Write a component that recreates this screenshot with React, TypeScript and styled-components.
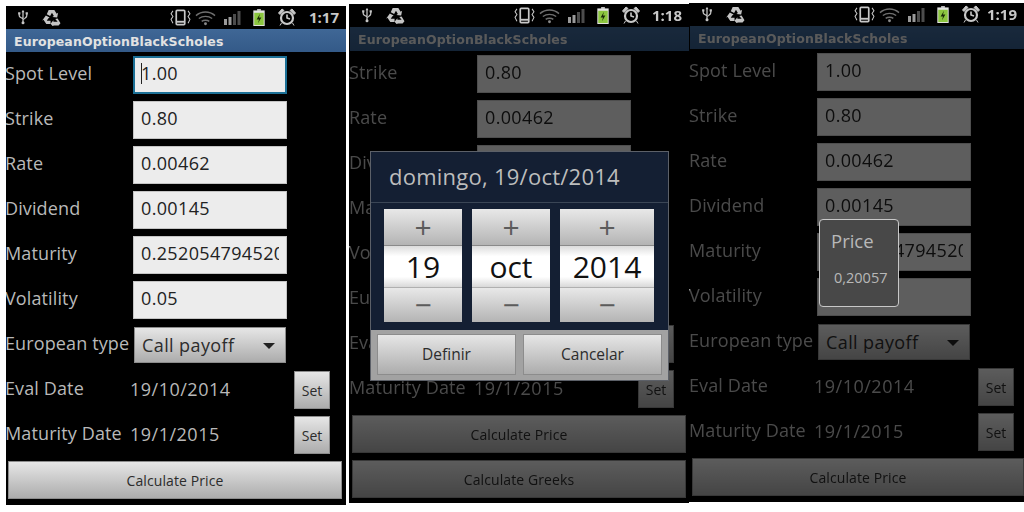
import React from "react";
import styled, { createGlobalStyle } from "styled-components";

const GlobalStyle = createGlobalStyle`
  html, body {
    margin: 0;
    background: #fff;
    font-family: "Open Sans", "Noto Sans", sans-serif;
    overflow: hidden;
  }
`;

type RowData =
  | { kind: "field"; label: string; value: string; focused?: boolean }
  | { kind: "select"; label: string; value: string }
  | { kind: "date"; label: string; value: string }
  | { kind: "action"; value: string };

const spot: RowData = { kind: "field", label: "Spot Level", value: "1.00", focused: true };
const spotPlain: RowData = { kind: "field", label: "Spot Level", value: "1.00" };
const common: RowData[] = [
  { kind: "field", label: "Strike", value: "0.80" },
  { kind: "field", label: "Rate", value: "0.00462" },
  { kind: "field", label: "Dividend", value: "0.00145" },
  { kind: "field", label: "Maturity", value: "0.25205479452054" },
  { kind: "field", label: "Volatility", value: "0.05" },
  { kind: "select", label: "European type", value: "Call payoff" },
  { kind: "date", label: "Eval Date", value: "19/10/2014" },
  { kind: "date", label: "Maturity Date", value: "19/1/2015" },
  { kind: "action", value: "Calculate Price" },
];

const StatusIcons = () => (
  <>
    <UsbIcon viewBox="0 0 16 20">
      <path d="M8 1v17M3 5v3c0 2 5 3 5 4s5-2 5-4V5" fill="none" stroke="#c4c4c4" strokeWidth="1.7" />
      <circle cx="8" cy="17" r="2" fill="#c4c4c4" />
      <path d="M8 0l2 3H6zM1.500 3h3v3h-3zM11.500 3h3v3h-3z" fill="#c4c4c4" />
    </UsbIcon>
    <RecycleIcon viewBox="0 0 20 18">
      <path d="M7 1h6l2.500 4 1.500-1-1 5-5-.5 1.500-1L10.500 4 8.500 7.500 5 5.500z" fill="#c4c4c4" />
      <path d="M4 7l4 2-1.500 1L5 12.500h4V16H4.500L1.500 11.500 0 12.500z" fill="#c4c4c4" />
      <path d="M16.500 10l3 5-2 2.500H12V19l-3-3.500 3-3.500v1.500h4.500L14 10.500z" fill="#c4c4c4" />
    </RecycleIcon>
    <VibrateIcon viewBox="0 0 22 18">
      <rect x="6.500" y="1.500" width="9" height="15" rx="1" fill="none" stroke="#c8c8c8" strokeWidth="1.8" />
      <path d="M6.500 13.500h9" stroke="#c8c8c8" strokeWidth="2" />
      <path d="M3 2L1 5l2 3-2 3 2 4M19 2l2 3-2 3 2 3-2 4" fill="none" stroke="#c8c8c8" strokeWidth="1.1" />
    </VibrateIcon>
    <WifiIcon viewBox="0 0 22 16">
      <path d="M1 5.500c6-5 14-5 20 0M4 8.500c4-3 10-3 14 0M7 11.500c2-1.500 6-1.500 8 0" fill="none" stroke="#6f6f6f" strokeWidth="1.4" />
      <circle cx="11" cy="14" r="1.500" fill="#8a8a8a" />
    </WifiIcon>
    <SignalIcon viewBox="0 0 17 14">
      <path d="M0 8h3v6H0zM4.500 6h3v8h-3z" fill="#9a9a9a" />
      <path d="M9 3h3v11H9zM13.500 0h3v14h-3z" fill="#4c4c4c" />
    </SignalIcon>
    <BatteryIcon viewBox="0 0 12 18">
      <path d="M4 0h4v2H4z" fill="#bdbdbd" />
      <rect y="1.500" width="12" height="16.500" fill="#e4e4e4" />
      <rect x="1" y="4" width="10" height="13" fill="#8cc63f" />
      <path d="M7 5L3.500 11H6l-1 4 3.500-6H6z" fill="#1a2a08" />
    </BatteryIcon>
    <AlarmIcon viewBox="0 0 18 18">
      <circle cx="9" cy="10" r="6" fill="none" stroke="#c8c8c8" strokeWidth="2.200" />
      <path d="M9 6.500V10l3 1" fill="none" stroke="#c8c8c8" strokeWidth="1.600" />
      <path d="M0.500 5L4 1l2 1.500L2 6.500zM17.500 5L14 1l-2 1.500L16 6.500zM3.500 15l-1.500 2.500M14.500 15l1.500 2.500" fill="#c8c8c8" stroke="#c8c8c8" />
    </AlarmIcon>
  </>
);

const Row = ({ row }: { row: RowData }) => {
  if (row.kind === "action") {
    return (
      <RowShell>
        <WideButton>{row.value}</WideButton>
      </RowShell>
    );
  }
  if (row.kind === "date") {
    return (
      <DateRow>
        <Label>{row.label}</Label>
        <DateValue>{row.value}</DateValue>
        <SetButton>Set</SetButton>
      </DateRow>
    );
  }
  return (
    <FieldRow>
      <Label>{row.label}</Label>
      {row.kind === "select" ? (
        <SelectBox>
          {row.value}
          <Caret />
        </SelectBox>
      ) : (
        <Field $focused={row.focused}>
          <FieldText>
            {row.focused && <TextCaret />}
            {row.value}
          </FieldText>
        </Field>
      )}
    </FieldRow>
  );
};

type PhoneProps = {
  left: number;
  top: number;
  width: number;
  inset: number;
  titleHeight: number;
  time: string;
  rows: RowData[];
  dim?: boolean;
  children?: React.ReactNode;
};

const Phone = ({ left, top, width, inset, titleHeight, time, rows, dim, children }: PhoneProps) => (
  <PhoneFrame $left={left} $top={top} $width={width} $inset={inset}>
    <StatusBar>
      <StatusIcons />
      <Clock>{time}</Clock>
    </StatusBar>
    <Screen>
      <TitleBar $height={titleHeight}>EuropeanOptionBlackScholes</TitleBar>
      {rows.map((row, i) => (
        <Row key={i} row={row} />
      ))}
      {dim && <Dimmer />}
      {children}
    </Screen>
  </PhoneFrame>
);

const Picker = ({ value, wide }: { value: string; wide?: boolean }) => (
  <PickerColumn $wide={wide}>
    <Stepper $height={36}>+</Stepper>
    <PickerValue>{value}</PickerValue>
    <Stepper $height={34}>&minus;</Stepper>
  </PickerColumn>
);

export default function App() {
  return (
    <>
      <GlobalStyle />
      <Page>
        <Phone left={6} top={6} width={340} inset={0} titleHeight={23} time="1:17" rows={[spot, ...common]} />
        <Phone
          left={3}
          top={4}
          width={340}
          inset={1}
          titleHeight={24}
          time="1:18"
          dim
          rows={[...common.slice(0, 9), { kind: "action", value: "Calculate Greeks" }]}
        >
          <DateDialog>
            <DialogTitle>domingo, 19/oct/2014</DialogTitle>
            <Pickers>
              <Picker value="19" />
              <Picker value="oct" />
              <Picker value="2014" wide />
            </Pickers>
            <DialogFooter>
              <DialogButton>Definir</DialogButton>
              <DialogButton>Cancelar</DialogButton>
            </DialogFooter>
          </DateDialog>
        </Phone>
        <Phone left={0} top={3} width={335} inset={1} titleHeight={23} time="1:19" dim rows={[spotPlain, ...common]}>
          <PriceToast>
            <ToastTitle>Price</ToastTitle>
            <ToastValue>0,20057</ToastValue>
          </PriceToast>
        </Phone>
      </Page>
    </>
  );
}

const Page = styled.div`
  display: flex;
  align-items: flex-start;
  width: 1024px;
  height: 512px;
  overflow: hidden;
  filter: blur(0.35px);
`;

const PhoneFrame = styled.div<{ $left: number; $top: number; $width: number; $inset: number }>`
  flex: none;
  box-sizing: border-box;
  width: ${({ $width }) => $width}px;
  height: 499px;
  margin: ${({ $top }) => $top}px 0 0 ${({ $left }) => $left}px;
  padding-left: ${({ $inset }) => $inset}px;
  background: #000;
  overflow: hidden;
`;

const StatusBar = styled.div`
  position: relative;
  height: 23px;
  background: #000;
`;

const StatusGlyph = styled.svg`
  position: absolute;
`;

const UsbIcon = styled(StatusGlyph)`
  left: 11px;
  top: 3px;
  width: 12px;
  height: 17px;
`;

const RecycleIcon = styled(StatusGlyph)`
  left: 36px;
  top: 3px;
  width: 19px;
  height: 17px;
`;

const VibrateIcon = styled(StatusGlyph)`
  left: 164px;
  top: 3px;
  width: 21px;
  height: 17px;
`;

const WifiIcon = styled(StatusGlyph)`
  left: 189px;
  top: 4px;
  width: 21px;
  height: 16px;
`;

const SignalIcon = styled(StatusGlyph)`
  left: 218px;
  top: 5px;
  width: 17px;
  height: 14px;
`;

const BatteryIcon = styled(StatusGlyph)`
  left: 247px;
  top: 3px;
  width: 12px;
  height: 17px;
`;

const AlarmIcon = styled(StatusGlyph)`
  left: 272px;
  top: 2px;
  width: 18px;
  height: 18px;
`;

const Clock = styled.span`
  position: absolute;
  right: 7px;
  top: 1px;
  color: #c8c8c8;
  font-size: 15px;
  font-weight: 700;
  line-height: 21px;
`;

const Screen = styled.div`
  position: relative;
  height: 476px;
`;

const TitleBar = styled.div<{ $height: number }>`
  box-sizing: border-box;
  height: ${({ $height }) => $height}px;
  padding-left: 8px;
  background: linear-gradient(#3f6796, #345a88);
  color: #e2e2e2;
  font-family: "DejaVu Sans", sans-serif;
  font-size: 12.5px;
  font-weight: 700;
  letter-spacing: 0.12px;
  line-height: ${({ $height }) => $height + 2}px;
`;

const RowShell = styled.div`
  display: flex;
  align-items: center;
  height: 45px;
`;

const FieldRow = styled(RowShell)`
  display: grid;
  grid-template-columns: 127px 154px;
`;

const DateRow = styled(RowShell)`
  display: grid;
  grid-template-columns: 124px 164px 36px;
`;

const Label = styled.span`
  margin: 0 0 4px -1px;
  color: #b9b9b9;
  font-size: 18px;
  letter-spacing: 0.12px;
  line-height: 24px;
  white-space: nowrap;
`;

const Field = styled.div<{ $focused?: boolean }>`
  box-sizing: border-box;
  height: 38px;
  padding: 0 ${({ $focused }) => ($focused ? 6 : 7)}px;
  background: #ececec;
  border: ${({ $focused }) => ($focused ? "2px solid #1c7096" : "1px solid #c4c4c4")};
  color: #222;
  font-size: 18px;
  letter-spacing: 0.35px;
  line-height: ${({ $focused }) => ($focused ? 31 : 33)}px;
`;

const FieldText = styled.div`
  overflow: hidden;
  white-space: nowrap;
`;

const TextCaret = styled.span`
  display: inline-block;
  width: 1px;
  height: 21px;
  margin-right: -1px;
  background: #222;
  vertical-align: -4px;
`;

const raised = `
  background: linear-gradient(#e6e6e6, #acacac);
  border: 1px solid #8c8c8c;
  box-sizing: border-box;
  color: #2c2c2c;
`;

const SelectBox = styled.div`
  ${raised}
  position: relative;
  width: 152px;
  height: 36px;
  margin-left: 1px;
  padding-left: 7px;
  font-size: 18px;
  letter-spacing: 0.4px;
  line-height: 34px;
`;

const Caret = styled.span`
  position: absolute;
  right: 10px;
  top: 15px;
  border-left: 6.5px solid transparent;
  border-right: 6.5px solid transparent;
  border-top: 6px solid #222;
`;

const DateValue = styled.span`
  margin-bottom: 2px;
  color: #b9b9b9;
  font-size: 18px;
  letter-spacing: 0.5px;
`;

const SetButton = styled.div`
  ${raised}
  height: 38px;
  font-size: 14px;
  line-height: 38px;
  text-align: center;
`;

const WideButton = styled.div`
  ${raised}
  width: 334px;
  height: 38px;
  margin-left: 2px;
  font-size: 14px;
  letter-spacing: 0.1px;
  line-height: 37px;
  text-align: center;
`;

const Dimmer = styled.div`
  position: absolute;
  inset: -1px 0 0 0;
  background: rgba(0, 0, 0, 0.6);
`;

const DateDialog = styled.div`
  position: absolute;
  left: 20px;
  top: 124px;
  width: 299px;
  height: 230px;
  box-sizing: border-box;
  display: flex;
  flex-direction: column;
  border: 1px solid #5c6068;
  background: #141f33;
`;

const DialogTitle = styled.div`
  flex: none;
  height: 50px;
  padding-left: 18px;
  border-bottom: 1px solid #3b4656;
  color: #bdbdbd;
  font-size: 22px;
  letter-spacing: 0.25px;
  line-height: 48px;
`;

const Pickers = styled.div`
  flex: none;
  display: flex;
  gap: 10px;
  padding: 6px 0 0 13px;
  height: 121px;
`;

const PickerColumn = styled.div<{ $wide?: boolean }>`
  display: flex;
  flex-direction: column;
  width: ${({ $wide }) => ($wide ? 94 : 78)}px;
  height: 113px;
`;

const Stepper = styled.div<{ $height: number }>`
  height: ${({ $height }) => $height}px;
  background: linear-gradient(#e8e8e8, #b4b4b4);
  color: #5c5c5c;
  font-size: 30px;
  line-height: ${({ $height }) => $height}px;
  text-align: center;
`;

const PickerValue = styled.div`
  height: 43px;
  box-sizing: border-box;
  border-top: 1px solid #8a8a8a;
  border-bottom: 1px solid #b0b0b0;
  background: linear-gradient(#dcdcdc, #fff 25%, #fff 75%, #d8d8d8);
  color: #111;
  font-size: 30px;
  line-height: 41px;
  text-align: center;
`;

const DialogFooter = styled.div`
  display: flex;
  gap: 7px;
  flex: 1;
  min-height: 0;
  padding: 4px 6px 5px;
  background: #a2a2a2;
`;

const DialogButton = styled.div`
  ${raised}
  flex: 1;
  font-size: 15.500px;
  line-height: 39px;
  text-align: center;
`;

const PriceToast = styled.div`
  position: absolute;
  left: 129px;
  top: 193px;
  width: 80px;
  height: 88px;
  box-sizing: border-box;
  border: 1.500px solid #c8c8c8;
  border-radius: 4px;
  background: #484848;
  color: #b8b8b8;
`;

const ToastTitle = styled.div`
  padding: 8px 0 0 11px;
  font-size: 18.500px;
  line-height: 26px;
`;

const ToastValue = styled.div`
  padding: 14px 0 0 14px;
  font-size: 14.500px;
  line-height: 20px;
`;
